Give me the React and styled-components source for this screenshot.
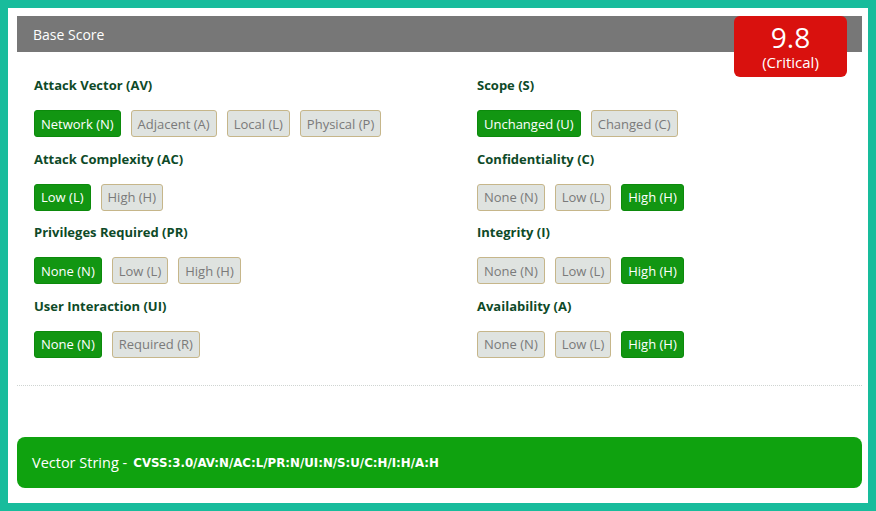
import React from "react";
import styled, { createGlobalStyle } from "styled-components";

const Global = createGlobalStyle`
  html, body { margin: 0; padding: 0; background: #18bc9c; }
  body { font-family: "Open Sans", "Noto Sans", sans-serif; }
`;

const Frame = styled.div`
  margin: 8px;
  height: 495px;
  background: #fff;
  box-sizing: border-box;
  padding: 8px 6px 0 9px;
  display: flex;
  flex-direction: column;
`;

const Header = styled.div`
  position: relative;
  height: 36px;
  background: #777777;
  color: #fff;
  font-size: 14px;
  display: flex;
  align-items: center;
  padding-left: 16px;
`;

const ScoreBox = styled.div`
  position: absolute;
  right: 15px;
  top: 0;
  width: 113px;
  height: 61px;
  background: #d9110e;
  border-radius: 6px;
  color: #fff;
  display: flex;
  flex-direction: column;
  align-items: center;
  justify-content: flex-start;
  padding-top: 7px;
  box-sizing: border-box;
`;

const ScoreValue = styled.div`
  font-size: 28px;
  line-height: 28px;
`;

const ScoreLabel = styled.div`
  font-size: 15px;
  line-height: 18px;
  margin-top: 2px;
`;

const Metrics = styled.div`
  display: grid;
  grid-template-columns: 443px 1fr;
  padding: 23px 0 0 17px;
`;

const Column = styled.div`
  display: flex;
  flex-direction: column;
  gap: 11px;
`;

const Group = styled.div`
  display: flex;
  flex-direction: column;
  gap: 15px;
  height: 62.5px;
`;

const Title = styled.div`
  font-weight: 700;
  font-size: 13px;
  line-height: 20px;
  color: #0e4a28;
`;

const Buttons = styled.div`
  display: flex;
  gap: 10px;
`;

const Btn = styled.div`
  height: 27px;
  box-sizing: border-box;
  padding: 0 6px;
  border-radius: 3px;
  display: flex;
  align-items: center;
  font-size: 13px;
  border: 1px solid ${(p) => (p.$active ? "#0c8a0c" : "#c6b68a")};
  background-color: ${(p) => (p.$active ? "#14a414" : "#dfe3e0")};
  background-image: ${(p) =>
    p.$active
      ? "radial-gradient(rgba(0,30,0,0.5) 0.55px, transparent 0.75px)"
      : "none"};
  background-size: 2px 2px;
  color: ${(p) => (p.$active ? "#fff" : "#7a7a7a")};
`;

const Separator = styled.div`
  margin-top: 27px;
  border-top: 1px dotted #cfd4d2;
`;

const VectorBox = styled.div`
  margin-top: 51px;
  height: 51px;
  background: #0fa20f;
  border-radius: 8px;
  display: flex;
  align-items: center;
  padding-left: 15px;
  color: #fff;
  font-size: 14.5px;
`;

const VectorCode = styled.span`
  font-family: "DejaVu Sans", sans-serif;
  font-weight: 700;
  font-size: 11.8px;
  margin-left: 6px;
`;

const left = [
  { t: "Attack Vector (AV)", o: ["Network (N)", "Adjacent (A)", "Local (L)", "Physical (P)"], a: 0 },
  { t: "Attack Complexity (AC)", o: ["Low (L)", "High (H)"], a: 0 },
  { t: "Privileges Required (PR)", o: ["None (N)", "Low (L)", "High (H)"], a: 0 },
  { t: "User Interaction (UI)", o: ["None (N)", "Required (R)"], a: 0 },
];
const right = [
  { t: "Scope (S)", o: ["Unchanged (U)", "Changed (C)"], a: 0 },
  { t: "Confidentiality (C)", o: ["None (N)", "Low (L)", "High (H)"], a: 2 },
  { t: "Integrity (I)", o: ["None (N)", "Low (L)", "High (H)"], a: 2 },
  { t: "Availability (A)", o: ["None (N)", "Low (L)", "High (H)"], a: 2 },
];

const renderCol = (groups) => (
  <Column>
    {groups.map((g) => (
      <Group key={g.t}>
        <Title>{g.t}</Title>
        <Buttons>
          {g.o.map((o, i) => (
            <Btn key={o} $active={i === g.a}>{o}</Btn>
          ))}
        </Buttons>
      </Group>
    ))}
  </Column>
);

export default function App() {
  return (
    <>
      <Global />
      <Frame>
        <Header>
          Base Score
          <ScoreBox>
            <ScoreValue>9.8</ScoreValue>
            <ScoreLabel>(Critical)</ScoreLabel>
          </ScoreBox>
        </Header>
        <Metrics>
          {renderCol(left)}
          {renderCol(right)}
        </Metrics>
        <Separator />
        <VectorBox>
          Vector String -<VectorCode>CVSS:3.0/AV:N/AC:L/PR:N/UI:N/S:U/C:H/I:H/A:H</VectorCode>
        </VectorBox>
      </Frame>
    </>
  );
}
